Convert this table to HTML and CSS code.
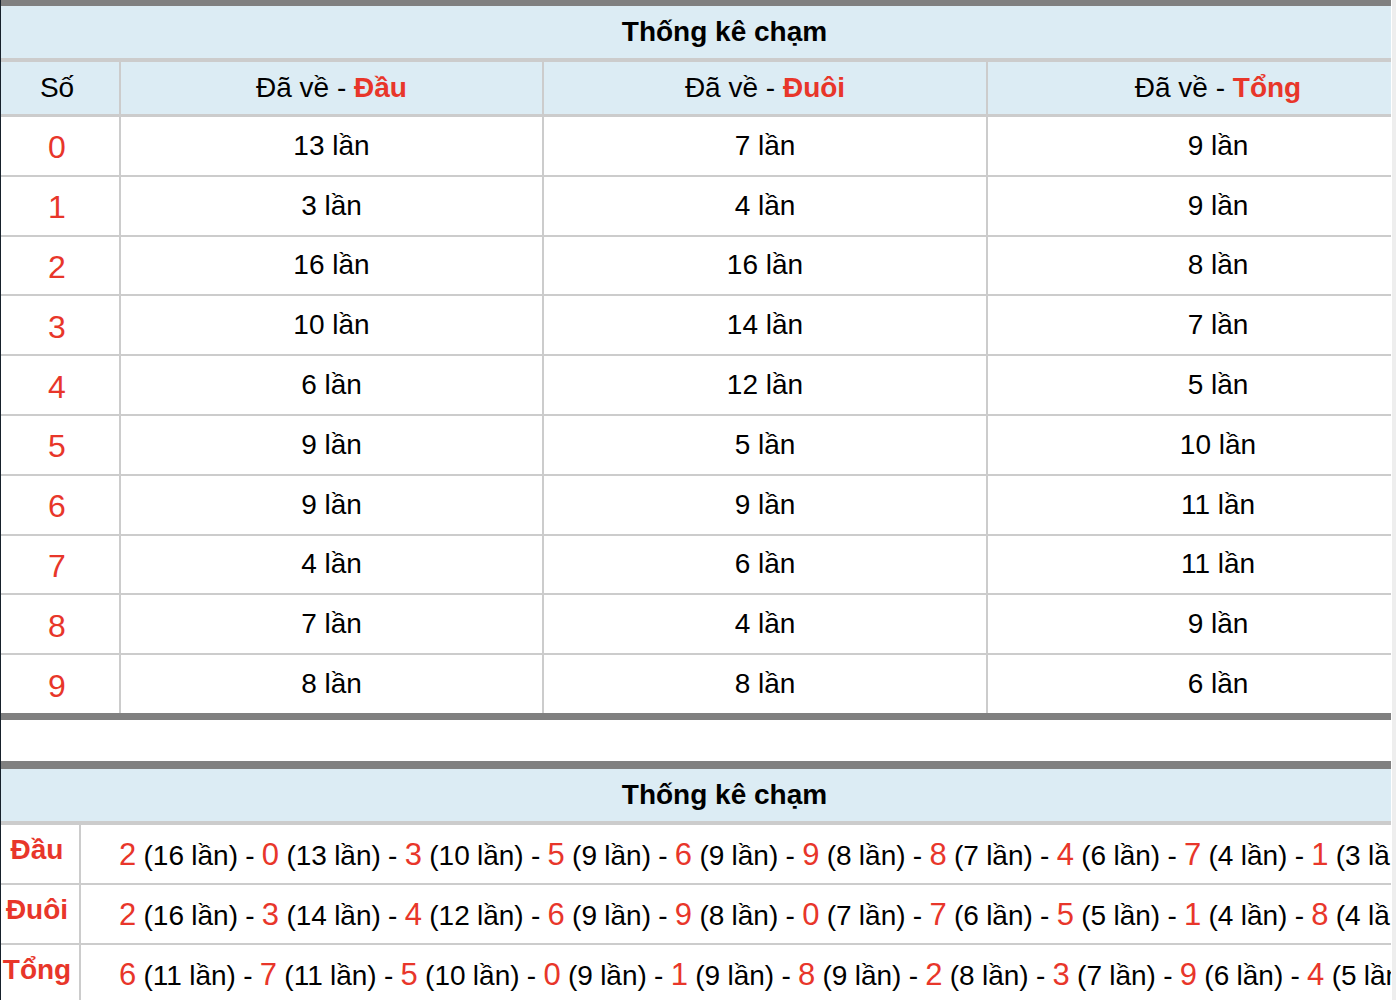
FILE: index.html
```html
<!DOCTYPE html>
<html lang="vi">
<head>
<meta charset="utf-8">
<title>Thống kê chạm</title>
<link rel="stylesheet" href="styles.css">
</head>
<body>
<div class="page">
  <div class="viewport">
    <main class="content">
      <section class="t1">
        <div class="title"><span>Thống kê chạm</span></div>
        <div class="grid4 head">
          <div class="cell first"><span>Số</span></div>
          <div class="cell"><span>Đã về - <b class="red">Đầu</b></span></div>
          <div class="cell"><span>Đã về - <b class="red">Đuôi</b></span></div>
          <div class="cell"><span>Đã về - <b class="red">Tổng</b></span></div>
        </div>
        <div class="grid4 body">
          <div class="cell first num">0</div><div class="cell">13 lần</div><div class="cell">7 lần</div><div class="cell">9 lần</div>
          <div class="cell first num">1</div><div class="cell">3 lần</div><div class="cell">4 lần</div><div class="cell">9 lần</div>
          <div class="cell first num">2</div><div class="cell">16 lần</div><div class="cell">16 lần</div><div class="cell">8 lần</div>
          <div class="cell first num">3</div><div class="cell">10 lần</div><div class="cell">14 lần</div><div class="cell">7 lần</div>
          <div class="cell first num">4</div><div class="cell">6 lần</div><div class="cell">12 lần</div><div class="cell">5 lần</div>
          <div class="cell first num">5</div><div class="cell">9 lần</div><div class="cell">5 lần</div><div class="cell">10 lần</div>
          <div class="cell first num">6</div><div class="cell">9 lần</div><div class="cell">9 lần</div><div class="cell">11 lần</div>
          <div class="cell first num">7</div><div class="cell">4 lần</div><div class="cell">6 lần</div><div class="cell">11 lần</div>
          <div class="cell first num">8</div><div class="cell">7 lần</div><div class="cell">4 lần</div><div class="cell">9 lần</div>
          <div class="cell first num">9</div><div class="cell">8 lần</div><div class="cell">8 lần</div><div class="cell">6 lần</div>
        </div>
      </section>

      <section class="t2">
        <div class="title"><span>Thống kê chạm</span></div>
        <div class="grid2">
          <div class="label">Đầu</div>
          <div class="line"><span><span class="d">2</span> (16 lần) - <span class="d">0</span> (13 lần) - <span class="d">3</span> (10 lần) - <span class="d">5</span> (9 lần) - <span class="d">6</span> (9 lần) - <span class="d">9</span> (8 lần) - <span class="d">8</span> (7 lần) - <span class="d">4</span> (6 lần) - <span class="d">7</span> (4 lần) - <span class="d">1</span> (3 lần)</span></div>
          <div class="label">Đuôi</div>
          <div class="line"><span><span class="d">2</span> (16 lần) - <span class="d">3</span> (14 lần) - <span class="d">4</span> (12 lần) - <span class="d">6</span> (9 lần) - <span class="d">9</span> (8 lần) - <span class="d">0</span> (7 lần) - <span class="d">7</span> (6 lần) - <span class="d">5</span> (5 lần) - <span class="d">1</span> (4 lần) - <span class="d">8</span> (4 lần)</span></div>
          <div class="label">Tổng</div>
          <div class="line"><span><span class="d">6</span> (11 lần) - <span class="d">7</span> (11 lần) - <span class="d">5</span> (10 lần) - <span class="d">0</span> (9 lần) - <span class="d">1</span> (9 lần) - <span class="d">8</span> (9 lần) - <span class="d">2</span> (8 lần) - <span class="d">3</span> (7 lần) - <span class="d">9</span> (6 lần) - <span class="d">4</span> (5 lần)</span></div>
        </div>
      </section>
    </main>
  </div>
  <div class="gutter"></div>
</div>
</body>
</html>
```

FILE: styles.css
```css
html, body {
  margin: 0;
  padding: 0;
  overflow: hidden;
  background: #ffffff;
}
body {
  font-family: "Liberation Sans", Arial, Helvetica, sans-serif;
  font-size: 28px;
  color: #000000;
}
.page {
  display: flex;
  min-height: 100vh;
}
.viewport {
  width: 1390px;
  border-left: 1px solid #17212b;
  flex: none;
  overflow: hidden;
}
.content {
  width: 1447px;
}
.gutter {
  width: 4px;
  margin-left: 1px;
  background: #eeeeee;
  flex: none;
}
.red { color: #e8362a; }
b.red { font-weight: bold; }

.title {
  height: 52px;
  display: flex;
  align-items: center;
  justify-content: center;
  background: #dcecf4;
  border-bottom: 4px solid #cccccc;
  font-weight: bold;
}

.t1 {
  border-top: 6px solid #808080;
  border-bottom: 7px solid #808080;
}
.grid4 {
  display: grid;
  grid-template-columns: 118px 421px 442px 460px;
  column-gap: 2px;
  background: #cccccc;
}
.grid4 .cell {
  display: flex;
  align-items: center;
  justify-content: center;
  background: #ffffff;
}
.grid4 .first {
  padding-right: 6px;
}
.head {
  border-bottom: 3px solid #cccccc;
}
.head .cell {
  height: 52px;
  background: #dcecf4;
}
.body {
  row-gap: 2px;
  grid-auto-rows: 57.8px;
}
.body .num {
  color: #e8362a;
  font-size: 32px;
  padding-top: 4px;
}

.t2 {
  margin-top: 41px;
  border-top: 8px solid #808080;
}
.grid2 {
  display: grid;
  grid-template-columns: 78px 1367px;
  grid-auto-rows: 58px;
  gap: 2px;
  background: #cccccc;
}
.label {
  background: #ffffff;
  color: #e8362a;
  font-weight: bold;
  display: flex;
  align-items: center;
  justify-content: center;
  padding-bottom: 8px;
  padding-right: 6px;
}
.line {
  background: #ffffff;
  white-space: nowrap;
  overflow: hidden;
  padding-left: 38px;
  display: flex;
  align-items: center;
  padding-top: 2px;
  word-spacing: -0.5px;
}
.line .d {
  color: #e8362a;
  font-size: 31px;
}
```
